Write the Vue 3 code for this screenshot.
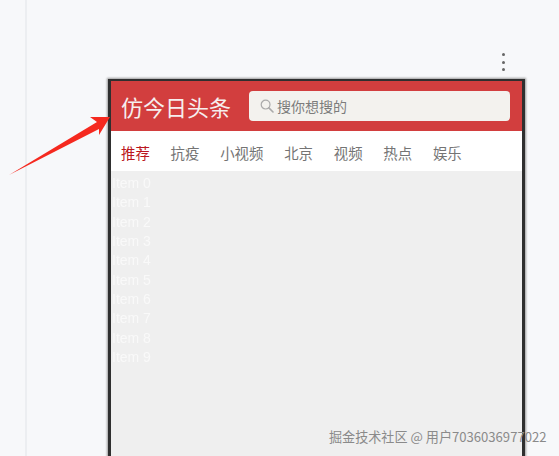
<script setup>
const tabs = ['推荐', '抗疫', '小视频', '北京', '视频', '热点', '娱乐']
const items = Array.from({ length: 10 }, (_, i) => `Item ${i}`)
</script>

<template>
  <div class="page">
    <div class="rail"></div>
    <div class="phone">
      <header class="top">
        <h1 class="title">仿今日头条</h1>
        <div class="search">
          <svg class="search-icon" width="14" height="14" viewBox="0 0 14 14">
            <circle cx="5.6" cy="5.6" r="4.4" fill="none" stroke="#aaa" stroke-width="1.2" />
            <path d="M8.9 8.9L13 13" stroke="#aaa" stroke-width="1.6" stroke-linecap="round" />
          </svg>
          <span>搜你想搜的</span>
        </div>
      </header>
      <nav class="tabs">
        <span v-for="(t, i) in tabs" :key="i" class="tab" :class="{ active: i === 0 }">{{ t }}</span>
      </nav>
      <ul class="list">
        <li v-for="item in items" :key="item">{{ item }}</li>
      </ul>
    </div>

    <div class="dots"><i></i><i></i><i></i></div>

    <svg class="arrow" width="120" height="70" viewBox="0 0 120 70">
      <polygon points="9,60 97,7 90,2 110,2 99,20 99,14" fill="#f5291f" />
    </svg>

    <div class="mark">掘金技术社区 @ 用户7036036977022</div>
  </div>
</template>

<style scoped>
.page {
  position: relative;
  display: flex;
  align-items: flex-start;
  width: 559px;
  height: 456px;
  overflow: hidden;
  background: #f7f8fa;
  font-family: "Noto Sans CJK SC", "Liberation Sans", sans-serif;
}

.rail {
  flex: none;
  width: 25px;
  height: 100%;
  border-right: 2px solid #eceef1;
}

.phone {
  flex: none;
  width: 411px;
  height: 400px;
  margin: 79px 0 0 81px;
  border: solid #2f2f2f;
  border-width: 2px 3px 0;
  box-shadow: 0 0 2px 1px #9a9a9a;
  background: #efefef;
}

.top {
  display: flex;
  align-items: center;
  gap: 18px;
  height: 50px;
  padding: 0 12px 0 10px;
  background: #d23e3e;
}

.title {
  margin: 0;
  color: #f6eeee;
  font-size: 22px;
  font-weight: 400;
  line-height: 1;
  white-space: nowrap;
}

.search {
  flex: 1;
  display: flex;
  align-items: center;
  gap: 3px;
  height: 30px;
  padding-left: 11px;
  border-radius: 4px;
  background: #f3f2ee;
  color: #7c7c7c;
  font-size: 14px;
}

.tabs {
  display: flex;
  align-items: center;
  gap: 20.8px;
  height: 40px;
  padding: 2px 0 0 10px;
  box-sizing: border-box;
  background: #fff;
}

.tab {
  color: #747474;
  font-size: 14.4px;
}

.tab.active {
  color: #bb1620;
}

.list {
  margin: 0;
  padding: 3px 0 0 1px;
  list-style: none;
  color: #f9f9f9;
  font-family: "Liberation Sans", sans-serif;
  font-size: 14px;
  line-height: 19.35px;
  filter: blur(0.6px);
}

.dots {
  position: absolute;
  top: 53px;
  left: 502px;
  display: flex;
  flex-direction: column;
  gap: 4.5px;
}

.dots i {
  width: 3px;
  height: 3px;
  border-radius: 50%;
  background: #666;
}

.arrow {
  position: absolute;
  top: 115px;
  left: 0;
}

.mark {
  position: absolute;
  top: 428px;
  left: 329px;
  color: #8a8a8a;
  font-size: 13.1px;
  line-height: 18px;
  white-space: nowrap;
}
</style>
